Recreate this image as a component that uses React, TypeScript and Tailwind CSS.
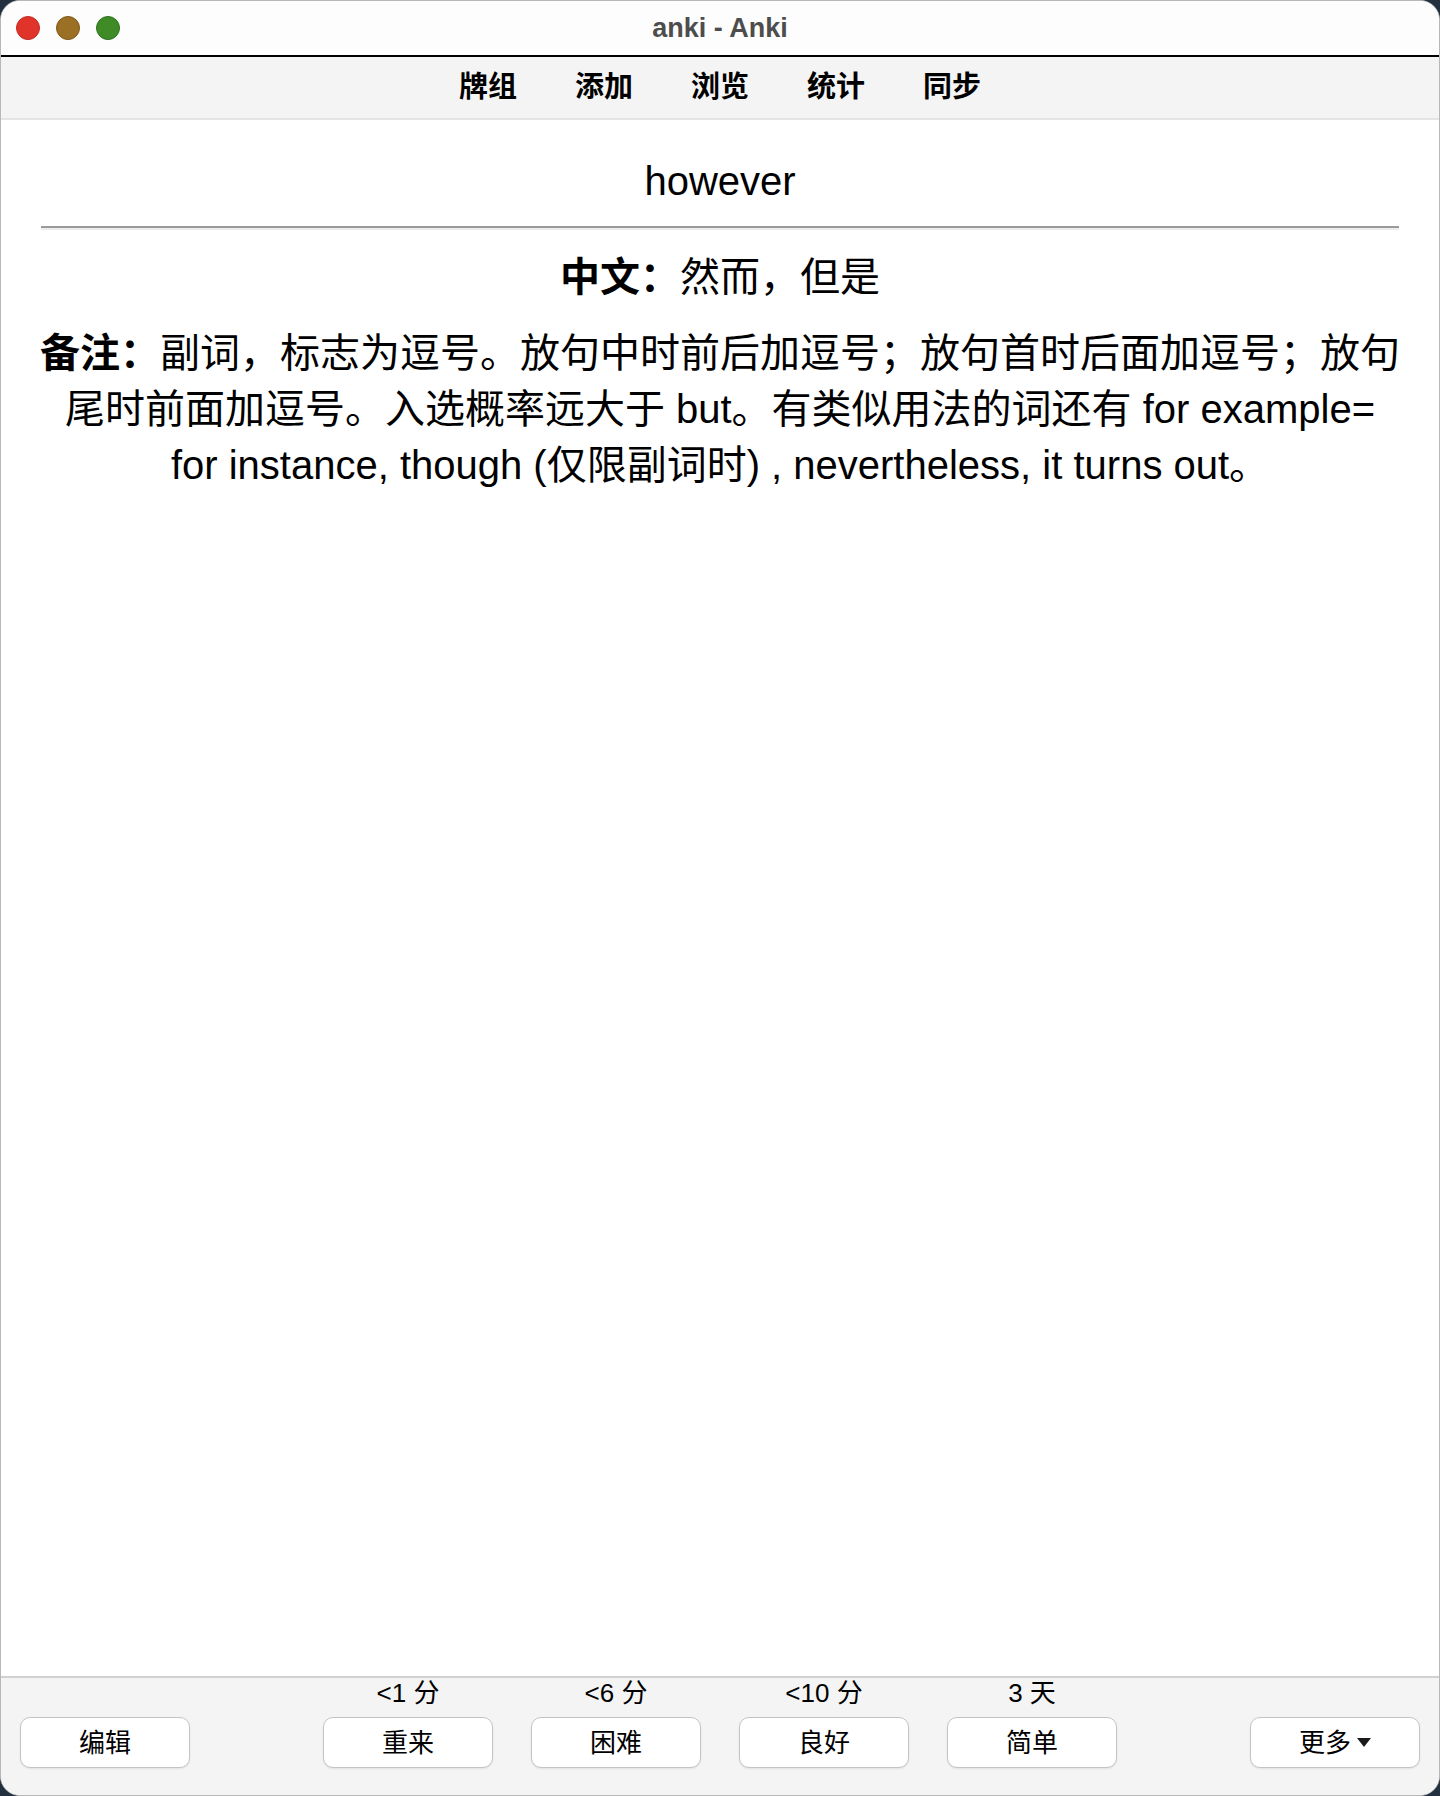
import React from 'react';

const font = "font-['Liberation_Sans','Noto_Sans_CJK_SC',sans-serif]";

const navItems = ['牌组', '添加', '浏览', '统计', '同步'];

const answers = [
  { label: '重来', due: '<1 分' },
  { label: '困难', due: '<6 分' },
  { label: '良好', due: '<10 分' },
  { label: '简单', due: '3 天' },
];

function Btn({ children }: { children: React.ReactNode }) {
  return (
    <button className="flex h-[51px] w-[170px] items-center justify-center rounded-[10px] border border-[#c4c4c4] bg-white text-[26px] leading-none text-black shadow-[0_1px_2px_rgba(0,0,0,0.08)]">
      {children}
    </button>
  );
}

export default function App() {
  return (
    <div className={`h-[1796px] w-[1440px] bg-[#22303f] ${font}`}>
      <div className="flex h-full flex-col overflow-hidden rounded-[20px] border border-[#b8b8b8] bg-white">
        {/* title bar */}
        <div className="relative flex h-[54px] shrink-0 items-center justify-center bg-[#fdfdfd]">
          <div className="absolute left-[15px] top-[15px] flex gap-[16px]">
            <span className="h-[24px] w-[24px] rounded-full border border-[#c12a21] bg-[#e0332a]" />
            <span className="h-[24px] w-[24px] rounded-full border border-[#7c5818] bg-[#9b6f24]" />
            <span className="h-[24px] w-[24px] rounded-full border border-[#31701d] bg-[#3f8c26]" />
          </div>
          <span className="text-[27px] font-bold text-[#4d4d4d]">anki - Anki</span>
        </div>
        <div className="h-[2px] shrink-0 bg-black" />

        {/* toolbar */}
        <div className="flex h-[63px] shrink-0 items-center justify-center gap-[58px] border-b-2 border-[#e4e4e4] bg-[#f4f4f4]">
          {navItems.map((item) => (
            <span key={item} className="text-[29px] font-bold text-black">
              {item}
            </span>
          ))}
        </div>

        {/* card */}
        <div className="flex-1 px-[40px] pt-[38px] text-center text-[40px] text-black">
          <div className="leading-[46px]">however</div>
          <div className="mt-[22px] border-t-2 border-b-2 border-t-[#9a9a9a] border-b-[#ededed]" />
          <div className="mt-[19px] leading-[56px]">
            <b>中文：</b>然而，但是
          </div>
          <div className="-mx-[2px] mt-[20px] leading-[56px]">
            <b>备注：</b>副词，标志为逗号。放句中时前后加逗号；放句首时后面加逗号；放句尾时前面加逗号。入选概率远大于 but。有类似用法的词还有 for example= for instance, though (仅限副词时) , nevertheless, it turns out。
          </div>
        </div>

        {/* answer bar */}
        <div className="flex shrink-0 items-end justify-between border-t-2 border-[#d0d0d0] bg-[#f4f4f4] px-[19px] pb-[27px]">
          <Btn>编辑</Btn>
          <div className="flex gap-[38px]">
            {answers.map((a) => (
              <div key={a.label} className="flex flex-col items-center">
                <span className="h-[30px] text-[26px] leading-[30px] text-black">{a.due}</span>
                <div className="mt-[9px]">
                  <Btn>{a.label}</Btn>
                </div>
              </div>
            ))}
          </div>
          <Btn>
            <span className="flex items-center gap-[6px]">
              更多
              <svg width="14" height="9" viewBox="0 0 14 9">
                <path d="M0 0h14L7 9z" fill="#1a1a1a" />
              </svg>
            </span>
          </Btn>
        </div>
      </div>
    </div>
  );
}
